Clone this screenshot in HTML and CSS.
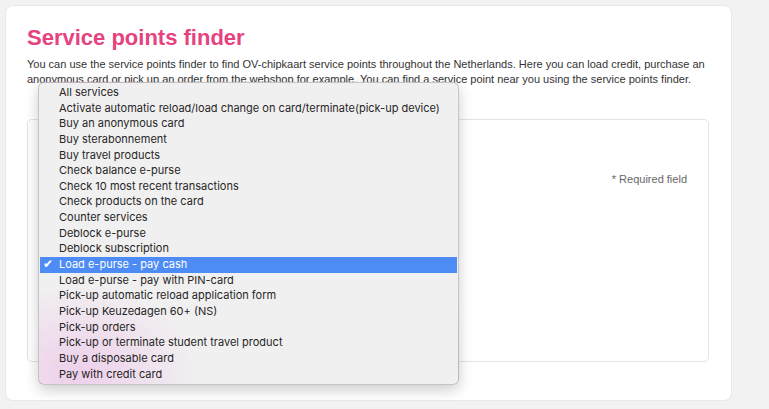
FILE: index.html
```html
<!DOCTYPE html>
<html lang="en">
<head>
    <meta charset="UTF-8">
    <meta name="viewport" content="width=device-width, initial-scale=1.0">
    <title>Service points finder</title>
    <link rel="stylesheet" href="styles.css">
</head>
<body>
    <div class="card">
        <h1>Service points finder</h1>
        <p class="intro">You can use the service points finder to find OV-chipkaart service points throughout the Netherlands. Here you can load credit, purchase an anonymous card or pick up an order from the webshop for example. You can find a service point near you using the service points finder.</p>

        <div class="search-box">
            <div class="required">* Required field</div>
        </div>

        <ul class="menu">
            <li>All services</li>
            <li>Activate automatic reload/load change on card/terminate(pick-up device)</li>
            <li>Buy an anonymous card</li>
            <li>Buy sterabonnement</li>
            <li>Buy travel products</li>
            <li>Check balance e-purse</li>
            <li>Check 10 most recent transactions</li>
            <li>Check products on the card</li>
            <li>Counter services</li>
            <li>Deblock e-purse</li>
            <li>Deblock subscription</li>
            <li class="selected">Load e-purse - pay cash</li>
            <li>Load e-purse - pay with PIN-card</li>
            <li>Pick-up automatic reload application form</li>
            <li>Pick-up Keuzedagen 60+ (NS)</li>
            <li>Pick-up orders</li>
            <li>Pick-up or terminate student travel product</li>
            <li>Buy a disposable card</li>
            <li>Pay with credit card</li>
        </ul>
    </div>
</body>
</html>
```

FILE: styles.css
```css
body {
    margin: 0;
    padding: 5px;
    background: #f2f2f2;
    font-family: "Liberation Sans", Arial, sans-serif;
}

.card {
    position: relative;
    box-sizing: border-box;
    width: 727px;
    height: 396px;
    background: white;
    border: 1px solid #e9e9e9;
    border-radius: 8px;
    padding: 18px 22px 0 21px;
}

h1 {
    margin: 0;
    font-size: 22px;
    line-height: 28px;
    font-weight: bold;
    color: #e6427f;
}

.intro {
    margin: 5px 0 0;
    font-size: 11px;
    line-height: 15px;
    color: #333;
}

.search-box {
    box-sizing: border-box;
    height: 243px;
    margin-top: 32px;
    border: 1px solid #e3e3e3;
    border-radius: 5px;
    padding: 53px 21px 0;
}

.required {
    text-align: right;
    font-size: 11px;
    line-height: 13px;
    color: #666;
}

.menu {
    position: absolute;
    left: 32px;
    top: 76px;
    width: 421px;
    height: 303px;
    box-sizing: border-box;
    margin: 0;
    padding: 2px 1px 4px;
    list-style: none;
    border-radius: 6px;
    border: 0.5px solid rgba(0, 0, 0, 0.18);
    background:
        radial-gradient(ellipse 120px 90px at 40px 290px, rgba(236, 196, 232, 0.75), rgba(236, 196, 232, 0) 100%),
        rgba(241, 240, 241, 0.97);
    box-shadow: 0 5px 14px rgba(0, 0, 0, 0.2);
    font-family: Inter, "Noto Sans", sans-serif;
    font-size: 11px;
    color: #262626;
}

.menu li {
    height: 15.65px;
    line-height: 15.65px;
    padding-left: 19px;
    white-space: nowrap;
    position: relative;
}

.menu li.selected {
    background: #4d8cf5;
    color: white;
}

.menu li.selected::before {
    content: "\2714";
    position: absolute;
    left: 3px;
    top: 0;
    font-family: "DejaVu Sans", sans-serif;
    font-size: 12px;
}
```
